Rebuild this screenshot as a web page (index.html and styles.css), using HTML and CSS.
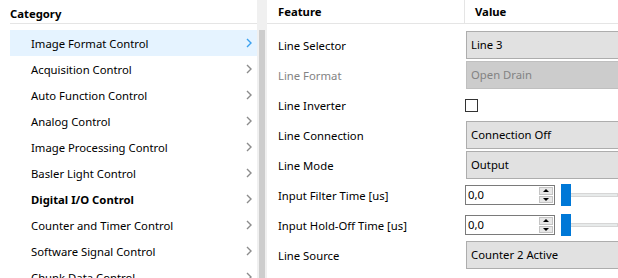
FILE: index.html
```html
<!DOCTYPE html>
<html>
<head>
<meta charset="utf-8">
<link rel="stylesheet" href="styles.css">
</head>
<body>
<div class="app">
  <div class="cat-panel">
    <div class="cat-head">Category</div>
    <ul class="cat-list">
      <li class="cat selected"><span>Image Format Control</span><svg class="chev" viewBox="0 0 6 10"><path d="M1 1 L5 5 L1 9" /></svg></li>
      <li class="cat"><span>Acquisition Control</span><svg class="chev" viewBox="0 0 6 10"><path d="M1 1 L5 5 L1 9" /></svg></li>
      <li class="cat"><span>Auto Function Control</span><svg class="chev" viewBox="0 0 6 10"><path d="M1 1 L5 5 L1 9" /></svg></li>
      <li class="cat"><span>Analog Control</span><svg class="chev" viewBox="0 0 6 10"><path d="M1 1 L5 5 L1 9" /></svg></li>
      <li class="cat"><span>Image Processing Control</span><svg class="chev" viewBox="0 0 6 10"><path d="M1 1 L5 5 L1 9" /></svg></li>
      <li class="cat"><span>Basler Light Control</span><svg class="chev" viewBox="0 0 6 10"><path d="M1 1 L5 5 L1 9" /></svg></li>
      <li class="cat bold"><span>Digital I/O Control</span><svg class="chev" viewBox="0 0 6 10"><path d="M1 1 L5 5 L1 9" /></svg></li>
      <li class="cat"><span>Counter and Timer Control</span><svg class="chev" viewBox="0 0 6 10"><path d="M1 1 L5 5 L1 9" /></svg></li>
      <li class="cat"><span>Software Signal Control</span><svg class="chev" viewBox="0 0 6 10"><path d="M1 1 L5 5 L1 9" /></svg></li>
      <li class="cat"><span>Chunk Data Control</span><svg class="chev" viewBox="0 0 6 10"><path d="M1 1 L5 5 L1 9" /></svg></li>
    </ul>
  </div>
  <div class="scrollbar"><div class="thumb"></div></div>
  <div class="feat-panel">
    <div class="feat-head">
      <div class="fh-name">Feature</div>
      <div class="fh-value">Value</div>
    </div>
    <div class="row">
      <div class="name">Line Selector</div>
      <div class="value"><div class="combo">Line 3</div></div>
    </div>
    <div class="row">
      <div class="name disabled">Line Format</div>
      <div class="value"><div class="combo combo-disabled">Open Drain</div></div>
    </div>
    <div class="row">
      <div class="name">Line Inverter</div>
      <div class="value"><div class="checkbox"></div></div>
    </div>
    <div class="row">
      <div class="name">Line Connection</div>
      <div class="value"><div class="combo">Connection Off</div></div>
    </div>
    <div class="row">
      <div class="name">Line Mode</div>
      <div class="value"><div class="combo">Output</div></div>
    </div>
    <div class="row">
      <div class="name">Input Filter Time [us]</div>
      <div class="value spinrow">
        <div class="spin"><span class="spin-text">0,0</span><div class="spin-btns"><div class="sb up"></div><div class="sb down"></div></div></div>
        <div class="slider"><div class="s-thumb"></div><div class="s-track"></div></div>
      </div>
    </div>
    <div class="row">
      <div class="name">Input Hold-Off Time [us]</div>
      <div class="value spinrow">
        <div class="spin"><span class="spin-text">0,0</span><div class="spin-btns"><div class="sb up"></div><div class="sb down"></div></div></div>
        <div class="slider"><div class="s-thumb"></div><div class="s-track"></div></div>
      </div>
    </div>
    <div class="row">
      <div class="name">Line Source</div>
      <div class="value"><div class="combo">Counter 2 Active</div></div>
    </div>
  </div>
</div>
</body>
</html>
```

FILE: styles.css
```css
html, body {
  margin: 0;
  padding: 0;
  background: #ffffff;
  overflow: hidden;
}
body {
  font-family: "Noto Sans", "Open Sans", sans-serif;
  font-size: 11.3px;
  color: #000000;
  width: 618px;
  height: 278px;
}
.app {
  display: flex;
  height: 278px;
  overflow: hidden;
}
.cat-panel {
  width: 257px;
  flex: none;
  padding-left: 10px;
  box-sizing: border-box;
}
.cat-head {
  border-bottom: 1px solid #e5e5e5;
  font-weight: bold;
  line-height: 24px;
  padding-top: 2px;
  height: 21px;
}
.cat-list {
  list-style: none;
  margin: 6px 0 0 0;
  padding: 0;
}
.cat {
  height: 26px;
  display: flex;
  align-items: center;
  justify-content: space-between;
  padding-left: 21px;
  padding-right: 5px;
}
.cat.selected {
  background: #e5f3ff;
}
.cat.bold {
  font-weight: bold;
}
.chev {
  width: 6px;
  height: 10px;
  fill: none;
  stroke: #8c8c8c;
  stroke-width: 1.4;
}
.cat.selected .chev {
  stroke: #3aa0ef;
}
.scrollbar {
  width: 10px;
  flex: none;
  background: #f0f0f0;
  height: 278px;
  padding-top: 30px;
  box-sizing: border-box;
}
.thumb {
  margin-left: 2px;
  width: 6px;
  height: 260px;
  background: #cdcdcd;
}
.feat-panel {
  flex: 1;
  min-width: 0;
}
.feat-head {
  display: flex;
  border-bottom: 1px solid #e5e5e5;
  font-weight: bold;
  box-sizing: border-box;
  height: 24px;
  margin-bottom: 6px;
}
.fh-name {
  width: 198px;
  flex: none;
  padding-left: 11px;
  box-sizing: border-box;
  border-right: 1px solid #e5e5e5;
  line-height: 24px;
}
.fh-value {
  padding-left: 10px;
  line-height: 24px;
}
.row {
  display: flex;
  height: 30px;
  align-items: center;
}
.name {
  width: 198px;
  flex: none;
  padding-left: 11px;
  box-sizing: border-box;
}
.name.disabled {
  color: #838383;
}
.value {
  flex: 1;
  min-width: 0;
  height: 30px;
  display: flex;
  align-items: center;
}
.combo {
  height: 28px;
  box-sizing: border-box;
  width: 200px;
  flex: none;
  margin-left: 1px;
  border: 1px solid #adadad;
  background: #e1e1e1;
  padding-left: 4px;
  line-height: 26px;
}
.combo-disabled {
  background: #cccccc;
  border-color: #bfbfbf;
  color: #838383;
}
.checkbox {
  width: 13px;
  height: 13px;
  box-sizing: border-box;
  border: 1px solid #333333;
  background: #ffffff;
}
.spinrow {
  gap: 6px;
}
.spin {
  width: 90px;
  height: 20px;
  box-sizing: border-box;
  border: 1px solid #7a7a7a;
  display: flex;
  align-items: center;
  justify-content: space-between;
  padding-left: 2px;
  padding-right: 1px;
  flex: none;
}
.spin-text {
  line-height: 18px;
}
.spin-btns {
  width: 14px;
  height: 16px;
  display: flex;
  flex-direction: column;
  gap: 1px;
  background: #ffffff;
}
.sb {
  flex: 1;
  background: #e7e7e7;
  border: 1px solid #c4c4c4;
  box-sizing: border-box;
  display: flex;
  align-items: center;
  justify-content: center;
}
.sb.up::after {
  content: "";
  border-left: 3px solid transparent;
  border-right: 3px solid transparent;
  border-bottom: 3px solid #000;
}
.sb.down::after {
  content: "";
  border-left: 3px solid transparent;
  border-right: 3px solid transparent;
  border-top: 3px solid #000;
}
.slider {
  flex: 1;
  height: 22px;
  display: flex;
  align-items: center;
  min-width: 0;
}
.s-thumb {
  width: 10px;
  height: 22px;
  background: #0078d7;
  flex: none;
}
.s-track {
  flex: 1;
  height: 4px;
  background: #e7eaea;
  border: 1px solid #d6d6d6;
  border-left: none;
  box-sizing: border-box;
}
```
